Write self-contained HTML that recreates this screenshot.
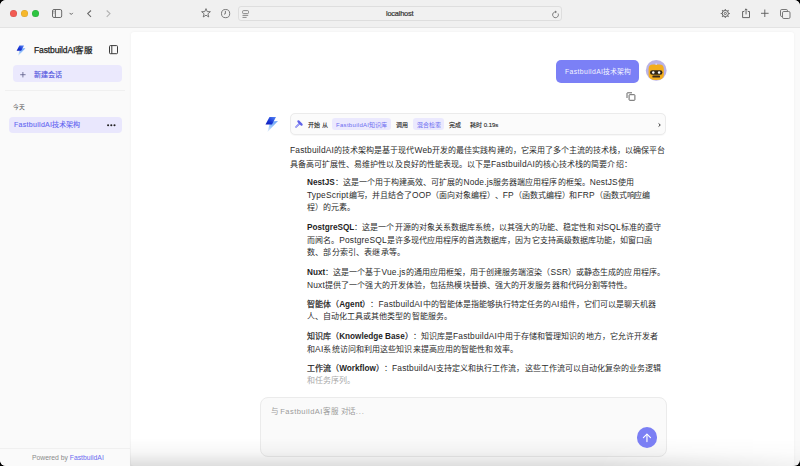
<!DOCTYPE html>
<html lang="zh-CN"><head><meta charset="utf-8">
<style>
*{margin:0;padding:0;box-sizing:border-box}
html,body{width:800px;height:466px;overflow:hidden;background:#000}
body{font-family:"Liberation Sans",sans-serif;position:relative}
.win{position:absolute;left:0;top:0;width:800px;height:466px;border-radius:6px;overflow:hidden;background:#fafafa}
.tb{position:absolute;left:0;top:0;width:800px;height:28px;background:#f0f0f0;border-bottom:1px solid #e3e3e3}
.dot{position:absolute;top:9.8px;width:7px;height:7px;border-radius:50%;box-shadow:inset 0 0 0 .5px rgba(0,0,0,.12)}
.a{position:absolute}
svg.a{overflow:visible}
.side{position:absolute;left:0;top:28px;width:130px;height:438px;background:#fafafa}
.main{position:absolute;left:131px;top:32px;width:663px;height:434px;background:#fff;border-radius:3px;box-shadow:0 0 3px rgba(0,0,0,.05)}
.ln{position:absolute;white-space:nowrap;text-spacing-trim:space-all;font-size:8px;letter-spacing:.04px;line-height:10px;color:#2b2b2b}
.ln b{font-weight:500;color:#1f1f1f;-webkit-text-stroke:.22px #1f1f1f}
.ln i{font-style:normal;font-size:8.4px;letter-spacing:.2px}
.ln b i{letter-spacing:0;font-size:8.2px;font-weight:bold;-webkit-text-stroke:0}
.t{position:absolute;white-space:nowrap;line-height:10px}
</style></head>
<body>
<div class="win">
  <!-- toolbar -->
  <div class="tb">
    <div class="dot" style="left:10px;background:#f25b53"></div>
    <div class="dot" style="left:21px;background:#f6b82c"></div>
    <div class="dot" style="left:32px;background:#2dc441"></div>
    <svg class="a" style="left:52px;top:9px" width="11" height="9" viewBox="0 0 11 9" fill="none" stroke="#6a6a6a" stroke-width="1">
      <rect x="0.5" y="0.5" width="9.2" height="8" rx="1.5"/><line x1="3.4" y1="0.5" x2="3.4" y2="8.5"/>
      <line x1="1.4" y1="2.4" x2="2.5" y2="2.4" stroke-width="0.8"/><line x1="1.4" y1="4" x2="2.5" y2="4" stroke-width="0.8"/>
    </svg>
    <svg class="a" style="left:69px;top:12px" width="5" height="4" viewBox="0 0 5 4" fill="none" stroke="#666" stroke-width="1"><polyline points="0.6,0.9 2.2,2.5 3.8,0.9"/></svg>
    <svg class="a" style="left:87px;top:10px" width="5" height="8" viewBox="0 0 5 8" fill="none" stroke="#6a6a6a" stroke-width="1.1"><polyline points="4,0.5 0.7,3.6 4,6.8"/></svg>
    <svg class="a" style="left:106px;top:10px" width="5" height="8" viewBox="0 0 5 8" fill="none" stroke="#b3b3b3" stroke-width="1.1"><polyline points="0.7,0.5 4,3.6 0.7,6.8"/></svg>
    <svg class="a" style="left:201px;top:8px" width="10" height="10" viewBox="0 0 10 10" fill="none" stroke="#6a6a6a" stroke-width="0.9"><polygon points="5,0.6 6.2,3.6 9.4,3.7 6.9,5.8 7.8,9 5,7.2 2.2,9 3.1,5.8 0.6,3.7 3.8,3.6" stroke-linejoin="round"/></svg>
    <svg class="a" style="left:221px;top:9px" width="10" height="10" viewBox="0 0 10 10" fill="none" stroke="#6a6a6a" stroke-width="0.9"><circle cx="4.6" cy="4.6" r="4.1"/><polyline points="4.4,1.9 4.4,4.7 3,5.2"/></svg>
    <div class="a" style="left:238.3px;top:6px;width:323.5px;height:14.5px;border:1px solid #dedede;border-radius:3px;background:#f1f1f1"></div>
    <svg class="a" style="left:242px;top:10px" width="8" height="9" viewBox="0 0 8 9" fill="none" stroke="#777" stroke-width="0.85"><rect x="0.6" y="0.6" width="5.9" height="3" rx="0.9"/><line x1="0.5" y1="5.4" x2="6.2" y2="5.4"/><line x1="0.5" y1="7.4" x2="4.6" y2="7.4"/></svg>
    <div class="t" style="left:386px;top:9.3px;font-size:7.4px;letter-spacing:-.2px;color:#333;-webkit-text-stroke:0.2px #333">localhost</div>
    <svg class="a" style="left:552px;top:9.6px" width="8" height="9" viewBox="0 0 8 9" fill="none" stroke="#707070" stroke-width="0.9"><path d="M3.5,1.9 A2.9,2.9 0 1 0 6.1,3.5"/><polygon points="3.1,0.5 5,1.9 3.1,3.3" fill="#707070" stroke="none"/></svg>
    <svg class="a" style="left:720px;top:8px" width="11" height="11" viewBox="0 0 11 11" fill="none" stroke="#5e5e5e">
      <circle cx="5.3" cy="5.5" r="3.1" stroke-width="1"/>
      <circle cx="5.3" cy="5.5" r="1.1" stroke-width="0.9"/>
      <g stroke-width="1.1" stroke-linecap="butt" stroke="#707070">
        <line x1="5.3" y1="0.9" x2="5.3" y2="2.3"/><line x1="5.3" y1="8.7" x2="5.3" y2="10.1"/>
        <line x1="0.7" y1="5.5" x2="2.1" y2="5.5"/><line x1="8.5" y1="5.5" x2="9.9" y2="5.5"/>
        <line x1="2.05" y1="2.25" x2="3" y2="3.2"/><line x1="7.6" y1="7.8" x2="8.55" y2="8.75"/>
        <line x1="8.55" y1="2.25" x2="7.6" y2="3.2"/><line x1="3" y1="7.8" x2="2.05" y2="8.75"/>
      </g>
    </svg>
    <svg class="a" style="left:742px;top:8px" width="9" height="11" viewBox="0 0 9 11" fill="none" stroke="#5e5e5e" stroke-width="0.95">
      <polyline points="2.3,3.5 0.6,3.5 0.6,9.6 7.5,9.6 7.5,3.5 5.8,3.5"/><line x1="4.05" y1="0.9" x2="4.05" y2="6.4"/><polyline points="2.7,2.2 4.05,0.85 5.4,2.2"/>
    </svg>
    <svg class="a" style="left:761px;top:9px" width="8" height="9" viewBox="0 0 8 9" fill="none" stroke="#5a5a5a" stroke-width="0.9"><line x1="3.8" y1="0.5" x2="3.8" y2="8"/><line x1="0" y1="4.3" x2="7.6" y2="4.3"/></svg>
    <svg class="a" style="left:780px;top:9px" width="11" height="10" viewBox="0 0 11 10" fill="none" stroke="#6a6a6a" stroke-width="0.9"><path d="M7.5,2 V1.8 A1.3,1.3 0 0 0 6.2,0.5 H1.8 A1.3,1.3 0 0 0 0.5,1.8 V6.2 A1.3,1.3 0 0 0 1.8,7.5 H2"/><rect x="2.5" y="2.5" width="7.5" height="7" rx="1.3"/></svg>
  </div>

  <!-- sidebar -->
  <div class="side"></div>
  <svg class="a" style="left:15px;top:44px" width="11" height="12" viewBox="0 0 14 17">
    <defs><linearGradient id="lg1" x1="1" y1="0" x2="0" y2="1"><stop offset="0" stop-color="#5b8cf5"/><stop offset="0.55" stop-color="#1b3ad8"/><stop offset="1" stop-color="#0a16b5"/></linearGradient>
    <linearGradient id="lg1b" x1="0.7" y1="0" x2="0.2" y2="1"><stop offset="0" stop-color="#6fa6f7"/><stop offset="0.6" stop-color="#9ec8fb"/><stop offset="1" stop-color="#c5ddf5" stop-opacity="0.6"/></linearGradient></defs>
    <path d="M7,6.5 L14,6 L3.5,17 L5.5,9.5 Z" fill="url(#lg1b)"/>
    <path d="M5.5,2 L12,2 L8,9.5 L1.5,9.5 Z" fill="url(#lg1)"/>
  </svg>
  <div class="t" style="left:34px;top:44.9px;font-size:8.5px;letter-spacing:-.12px;color:#222;-webkit-text-stroke:0.25px #222">FastbuildAI客服</div>
  <svg class="a" style="left:109px;top:45px" width="10" height="10" viewBox="0 0 10 10" fill="none" stroke="#3a3a3a" stroke-width="1"><rect x="0.5" y="0.6" width="8" height="8.1" rx="0.9"/><line x1="2.8" y1="0.6" x2="2.8" y2="8.7"/></svg>
  <div class="a" style="left:13px;top:65px;width:109px;height:17px;border-radius:4px;background:#ebe9fd"></div>
  <svg class="a" style="left:19.5px;top:71.5px" width="6" height="6" viewBox="0 0 6 6" fill="none" stroke="#5a5a86" stroke-width="0.8"><line x1="2.9" y1="0" x2="2.9" y2="5.4"/><line x1="0.2" y1="2.7" x2="5.6" y2="2.7"/></svg>
  <div class="t" style="left:34px;top:69.8px;font-size:7px;color:#5558e0;-webkit-text-stroke:0.15px #5558e0">新建会话</div>
  <div class="a" style="left:5px;top:90px;width:120px;height:1px;background:#f0f0f0"></div>
  <div class="t" style="left:13px;top:101.5px;font-size:5.8px;color:#555">今天</div>
  <div class="a" style="left:9px;top:117px;width:113px;height:16px;border-radius:4px;background:#e9e7fd"></div>
  <div class="t" style="left:14px;top:120.2px;font-size:7px;color:#6366f1;-webkit-text-stroke:0.1px #6366f1"><span style="letter-spacing:.3px">FastbuildAI</span>技术架构</div>
  <svg class="a" style="left:107px;top:123.5px" width="9" height="3" viewBox="0 0 9 3" fill="#222"><circle cx="1.1" cy="1.2" r="1.05"/><circle cx="4.3" cy="1.2" r="1.05"/><circle cx="7.5" cy="1.2" r="1.05"/></svg>
  <div class="a" style="left:0;top:448px;width:130px;height:1px;background:#f0f0f0"></div>
  <div class="t" style="left:32px;top:453px;font-size:6.8px;color:#8a8a8a">Powered by <span style="color:#6b6cf0">FastbuildAI</span></div>

  <!-- main -->
  <div class="main"></div>
  

  <!-- user bubble -->
  <div class="a" style="left:556px;top:60px;width:83px;height:23px;border-radius:5px;background:#7b80f6"></div>
  <div class="t" style="left:565px;top:67px;font-size:6.8px;color:#f4f4ff"><span style="letter-spacing:.4px">FastbuildAI</span>技术架构</div>
  <svg class="a" style="left:645px;top:60px" width="22" height="22" viewBox="0 0 22 22">
    <circle cx="11.2" cy="10.4" r="10.4" fill="#bab3e6"/>
    <path d="M3.6,9 Q3.6,4.6 8,4.6 L14.4,4.6 Q18.8,4.6 18.8,9 L18.8,15 Q18.8,20 11.2,20 Q3.6,20 3.6,15 Z" fill="#f3ad1d"/>
    <rect x="10.5" y="3.2" width="1.4" height="1.8" fill="#d9d3f2"/>
    <rect x="5" y="10.3" width="12.4" height="4.4" rx="2.2" fill="#2e2418"/>
    <circle cx="8.3" cy="12.5" r="1.25" fill="#fff"/><circle cx="14.1" cy="12.5" r="1.25" fill="#fff"/>
    <rect x="7.4" y="15.6" width="7.6" height="2" rx="0.6" fill="#3a2a1a"/>
  </svg>
  <svg class="a" style="left:626px;top:91.5px" width="10" height="10" viewBox="0 0 10 10" fill="none" stroke="#555" stroke-width="0.9"><path d="M1,6 V1.3 A0.5,0.5 0 0 1 1.5,0.8 H6"/><rect x="3.1" y="2.7" width="5.8" height="5.6" rx="0.6"/></svg>

  <!-- AI -->
  <svg class="a" style="left:264px;top:115px" width="14" height="17" viewBox="0 0 14 17">
    <path d="M7,6.5 L14,6 L3.5,17 L5.5,9.5 Z" fill="url(#lg1b)"/>
    <path d="M5.5,2 L12,2 L8,9.5 L1.5,9.5 Z" fill="url(#lg1)"/>
  </svg>
  <div class="a" style="left:290px;top:113px;width:376px;height:22px;border:1px solid #ebebeb;border-radius:5px;background:#fbfbfb;box-shadow:0 0.5px 1px rgba(0,0,0,.03)"></div>
  <svg class="a" style="left:295px;top:120px" width="8" height="8" viewBox="0 0 8 8" fill="none" stroke-linecap="round">
    <line x1="4.2" y1="3.8" x2="1" y2="7" stroke="#7073f0" stroke-width="1.7"/>
    <line x1="4.2" y1="3.8" x2="1" y2="7" stroke="#d8d8fb" stroke-width="0.5"/>
    <line x1="3.4" y1="1.4" x2="6.6" y2="4.6" stroke="#5f62e8" stroke-width="2.2"/>
  </svg>
  <div class="t" style="left:308px;top:119.5px;font-size:6px;color:#2a2a2a;-webkit-text-stroke:.12px #2a2a2a">开始 从</div>
  <div class="a" style="left:332px;top:118px;width:59px;height:12px;border-radius:3px;background:#ebe9fe"></div>
  <div class="t" style="left:336px;top:119.5px;font-size:6px;color:#6b6cf0"><span style="letter-spacing:.3px">FastbuildAI</span>知识库</div>
  <div class="t" style="left:396px;top:119.5px;font-size:6px;color:#2a2a2a;-webkit-text-stroke:.12px #2a2a2a">调用</div>
  <div class="a" style="left:413px;top:118px;width:31px;height:12px;border-radius:3px;background:#ebe9fe"></div>
  <div class="t" style="left:417px;top:119.5px;font-size:6px;color:#6b6cf0">混合检索</div>
  <div class="t" style="left:449px;top:119.5px;font-size:6px;color:#2a2a2a;-webkit-text-stroke:.12px #2a2a2a">完成</div>
  <div class="t" style="left:470px;top:119.5px;font-size:6px;color:#2a2a2a;-webkit-text-stroke:.12px #2a2a2a">耗时 0.19s</div>
  <svg class="a" style="left:657.5px;top:122.5px" width="4" height="5" viewBox="0 0 4 5" fill="none" stroke="#3a3a3a" stroke-width="1"><polyline points="0.6,0.5 2.3,2 0.6,3.5"/></svg>

  <!-- paragraph -->
  <div class="ln" style="left:290px;top:145px"><i>FastbuildAI</i>的技术架构是基于现代<i>Web</i>开发的最佳实践构建的，它采用了多个主流的技术栈，以确保平台</div>
  <div class="ln" style="left:290px;top:159px">具备高可扩展性、易维护性以及良好的性能表现。以下是<i>FastbuildAI</i>的核心技术栈的简要介绍：</div>

  <div class="ln" style="left:307px;top:177px"><b><i>NestJS</i></b>：这是一个用于构建高效、可扩展的<i>Node.js</i>服务器端应用程序的框架。<i>NestJS</i>使用</div>
  <div class="ln" style="left:307px;top:190px;letter-spacing:-.06px"><i>TypeScript</i>编写，并且结合了<i>OOP</i>（面向对象编程）、<i>FP</i>（函数式编程）和<i>FRP</i>（函数式响应编</div>
  <div class="ln" style="left:307px;top:203px">程）的元素。</div>

  <div class="ln" style="left:307px;top:222px"><b><i>PostgreSQL</i></b>：这是一个开源的对象关系数据库系统，以其强大的功能、稳定性和对<i>SQL</i>标准的遵守</div>
  <div class="ln" style="left:307px;top:235px">而闻名。<i>PostgreSQL</i>是许多现代应用程序的首选数据库，因为它支持高级数据库功能，如窗口函</div>
  <div class="ln" style="left:307px;top:248px;letter-spacing:.18px">数、部分索引、表继承等。</div>

  <div class="ln" style="left:307px;top:267px"><b><i>Nuxt</i></b>：这是一个基于<i>Vue.js</i>的通用应用框架，用于创建服务端渲染（<i>SSR</i>）或静态生成的应用程序。</div>
  <div class="ln" style="left:307px;top:280px;letter-spacing:.09px"><i>Nuxt</i>提供了一个强大的开发体验，包括热模块替换、强大的开发服务器和代码分割等特性。</div>

  <div class="ln" style="left:307px;top:299px"><b>智能体（<i>Agent</i>）</b>：<i>FastbuildAI</i>中的智能体是指能够执行特定任务的<i>AI</i>组件，它们可以是聊天机器</div>
  <div class="ln" style="left:307px;top:312px">人、自动化工具或其他类型的智能服务。</div>

  <div class="ln" style="left:307px;top:331px"><b>知识库（<i>Knowledge Base</i>）</b>：知识库是<i>FastbuildAI</i>中用于存储和管理知识的地方，它允许开发者</div>
  <div class="ln" style="left:307px;top:344px;letter-spacing:.1px">和<i>AI</i>系统访问和利用这些知识来提高应用的智能性和效率。</div>

  <div class="ln" style="left:307px;top:363px"><b>工作流（<i>Workflow</i>）</b>：<i>FastbuildAI</i>支持定义和执行工作流，这些工作流可以自动化复杂的业务逻辑</div>
  <div class="ln" style="left:307px;top:376px;color:#a8a8a8">和任务序列。</div>

  <!-- input -->
  <div class="a" style="left:260px;top:397px;width:407px;height:60px;border:1px solid #ebebeb;border-radius:8px;background:#fafafa"></div>
  <div class="t" style="left:270.5px;top:407px;font-size:7.5px;color:#9a9a9a;text-spacing-trim:space-all">与<span style="margin-left:2.8px;letter-spacing:.45px">FastbuildAI</span><span style="letter-spacing:1.2px">客服</span><span style="margin-left:1.5px;letter-spacing:.5px">对话</span><span style="letter-spacing:.9px">...</span></div>
  <div class="a" style="left:130px;top:438px;width:670px;height:28px;background:linear-gradient(rgba(0,0,0,0),rgba(0,0,0,.03) 50%,rgba(0,0,0,.13));-webkit-mask-image:linear-gradient(90deg,#000 0,#000 70%,rgba(0,0,0,.35) 100%)"></div>
  <div class="a" style="left:636.5px;top:427.2px;width:20.8px;height:20.8px;border-radius:50%;background:#7b7ff4"></div>
  <svg class="a" style="left:642px;top:432px" width="10" height="11" viewBox="0 0 10 11" fill="none" stroke="#fff" stroke-width="1.15" stroke-linecap="round" stroke-linejoin="round"><line x1="4.95" y1="2.2" x2="4.95" y2="9.6"/><polyline points="1.4,5.6 4.95,2.1 8.5,5.6"/></svg>
</div>
</body></html>
